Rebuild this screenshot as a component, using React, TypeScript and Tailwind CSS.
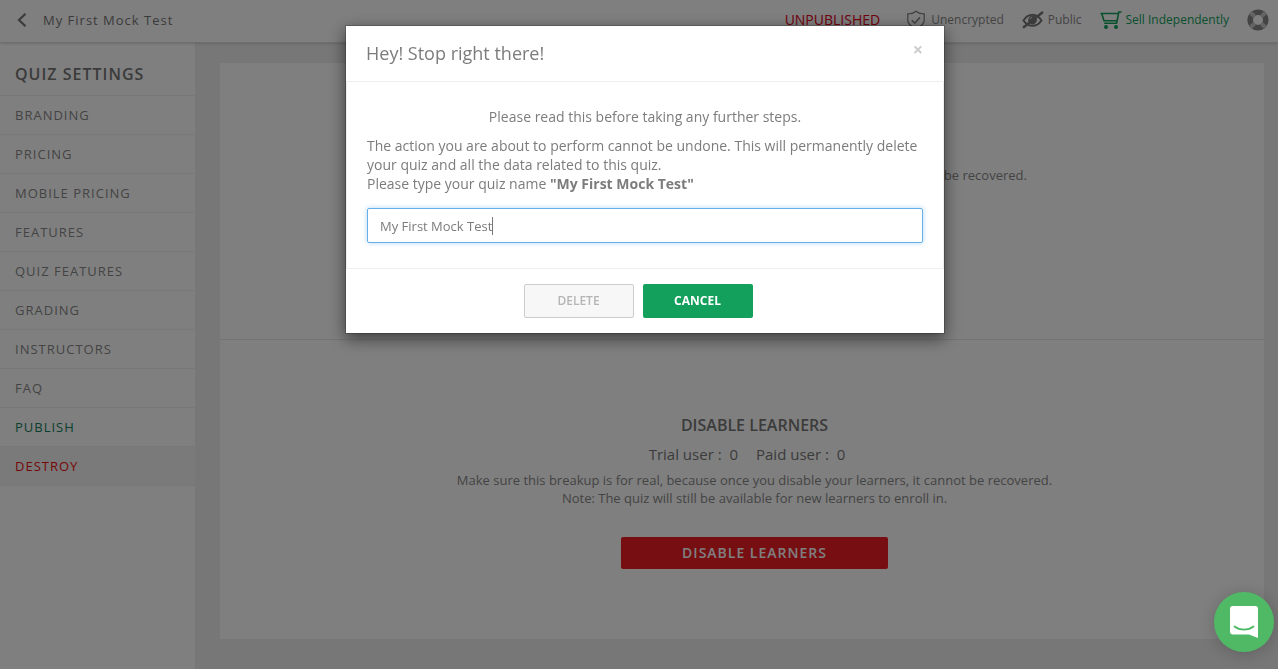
import React, { useState } from 'react';

const QUIZ_NAME = 'My First Mock Test';

const menuItems = [
  { label: 'BRANDING', className: 'text-[#888]' },
  { label: 'PRICING', className: 'text-[#888]' },
  { label: 'MOBILE PRICING', className: 'text-[#888]' },
  { label: 'FEATURES', className: 'text-[#888]' },
  { label: 'QUIZ FEATURES', className: 'text-[#888]' },
  { label: 'GRADING', className: 'text-[#888]' },
  { label: 'INSTRUCTORS', className: 'text-[#888]' },
  { label: 'FAQ', className: 'text-[#888]' },
  { label: 'PUBLISH', className: 'text-[#12805c]' },
  { label: 'DESTROY', className: 'text-[#ee1010] bg-[#f4f4f4]' },
];

const ShieldIcon: React.FC = () => (
  <svg className="w-5 h-5" viewBox="0 0 20 20" fill="none" stroke="currentColor" strokeWidth="1.3">
    <path d="M10 1.2C8 3 5 4 1.8 3.8v6.4c0 4 3.6 6.5 8.2 8.6 4.6-2.1 8.2-4.6 8.2-8.6V3.8C15 4 12 3 10 1.2z" />
    <path d="M5.8 10.2l3 3 5.2-5.8" strokeWidth="1.6" />
  </svg>
);

const EyeOffIcon: React.FC = () => (
  <svg className="w-[22px] h-[18px] text-[#777]" viewBox="0 0 22 18" fill="none" stroke="currentColor">
    <path d="M1.5 9.5C4 5.5 7 3.8 10.5 3.8s6.5 1.7 9 5.7c-2.5 3.7-5.5 5.3-9 5.3s-6.5-1.6-9-5.3z" strokeWidth="2" />
    <circle cx="10.5" cy="9" r="4.4" fill="currentColor" stroke="none" />
    <path d="M8 8.3c.2-1.200 1-1.900 2.200-2" stroke="#fff" strokeWidth="1" />
    <path d="M1 16.800L21 1" strokeWidth="2.400" />
  </svg>
);

const CartIcon: React.FC = () => (
  <svg className="w-[22px] h-[18px]" viewBox="0 0 22 18" fill="none" stroke="currentColor" strokeWidth="1.6">
    <path d="M21.5 1h-2.7l-2.2 11.2H4.2M.5 2.5h17.5M1.7 2.5l2.3 7.3h12.500" />
    <circle cx="6" cy="16" r="2" fill="currentColor" stroke="none" />
    <circle cx="16" cy="16" r="2" fill="currentColor" stroke="none" />
  </svg>
);

const LifeRingIcon: React.FC = () => (
  <svg className="w-[22px] h-[22px]" viewBox="0 0 22 22" fill="none">
    <circle cx="11" cy="11" r="7.8" stroke="#888" strokeWidth="5.6" />
    <path
      d="M3.5 3.5l4.2 4.2M18.5 3.5l-4.2 4.2M3.5 18.5l4.2-4.2M18.5 18.5l-4.2-4.2"
      stroke="#c8c8c8"
      strokeWidth="4"
    />
  </svg>
);

const Header: React.FC = () => (
  <header className="relative flex items-center justify-between h-[43px] pl-4 pr-[9px] pb-[3px] bg-white border-b border-[#ddd] shadow-sm">
    <a href="#quizzes" className="flex items-center gap-4 text-[13px] leading-5 tracking-[1px] text-[#777]">
      <svg className="w-[11px] h-[14px]" viewBox="0 0 11 14" fill="none" stroke="currentColor" strokeWidth="2.2">
        <path d="M9.5 .8L3 7l6.5 6.2" />
      </svg>
      {QUIZ_NAME}
    </a>
    <div className="flex items-center gap-[18px] text-xs text-[#888]">
      <span className="mr-2 text-sm font-medium text-[#e3001b]">UNPUBLISHED</span>
      <span className="flex items-center gap-[5px]">
        <ShieldIcon />
        Unencrypted
      </span>
      <span className="flex items-center gap-1">
        <EyeOffIcon />
        Public
      </span>
      <span className="flex items-center gap-1 text-[#12a05c]">
        <CartIcon />
        Sell Independently
      </span>
      <button type="button" aria-label="Help">
        <LifeRingIcon />
      </button>
    </div>
  </header>
);

const Sidebar: React.FC = () => (
  <aside className="w-[195px] shrink-0 bg-white">
    <h2 className="px-[15px] pt-[19px] pb-[9px] leading-6 text-base font-semibold tracking-[1px] text-[#777] border-b border-[#f0f0f0]">
      QUIZ SETTINGS
    </h2>
    <nav>
      {menuItems.map(item => (
        <a
          key={item.label}
          href="#settings"
          className={`block px-[15px] py-[9px] leading-5 text-[13px] tracking-[1px] border-b border-[#f0f0f0] ${item.className}`}
        >
          {item.label}
        </a>
      ))}
    </nav>
  </aside>
);

const Content: React.FC = () => (
  <main className="grow pt-5 pr-[14px] pb-[30px] pl-[25px] bg-[#eee]">
    <div className="bg-white text-center text-[13px] leading-[18px] text-[#888]">
      <section className="pt-[103px] pb-[155px] pl-[25px] border-b border-[#e8e8e8]">
        <p>Make sure this breakup is for real, because once you delete a quiz, it cannot be recovered.</p>
      </section>
      <section className="flex flex-col items-center pt-[75px] pb-[70px] pl-[25px]">
        <h3 className="mb-[7px] leading-5 text-base font-semibold text-[#777]">DISABLE LEARNERS</h3>
        <div className="flex mb-[5px] leading-6 text-[15px] text-[#777]">
          <span className="mr-[18px]">Trial user : &nbsp;0</span>
          <span className="mr-[15px]">Paid user : &nbsp;0</span>
        </div>
        <p>Make sure this breakup is for real, because once you disable your learners, it cannot be recovered.</p>
        <p>Note: The quiz will still be available for new learners to enroll in.</p>
        <button type="button" className="w-[267px] h-8 mt-[30px] rounded-xs bg-[#ed1c24] text-sm font-semibold tracking-[1px] text-white">
          DISABLE LEARNERS
        </button>
      </section>
    </div>
  </main>
);

const DeleteModal: React.FC = () => {
  const [name, setName] = useState(QUIZ_NAME);

  return (
    <div className="fixed inset-0 z-20 flex items-start justify-center pt-[25px] pl-3 bg-black/50">
      <div
        role="dialog"
        aria-labelledby="modal-title"
        className="w-full max-w-[600px] bg-white bg-clip-padding border border-black/20 shadow-[0_5px_15px_rgba(0,0,0,0.5)] text-sm leading-[19px] text-[#7c7c7c]"
      >
        <div className="flex items-start justify-between pl-5 pr-[21px] py-[15px] border-b border-[#eee]">
          <h1 id="modal-title" className="text-lg leading-[25px]">Hey! Stop right there!</h1>
          <button type="button" aria-label="Close" className="text-lg leading-[17px] font-bold text-[#ccc]">×</button>
        </div>
        <div className="px-5 py-[25px] border-x border-[#eee]">
          <p className="mb-[10px] text-center">Please read this before taking any further steps.</p>
          <p>
            The action you are about to perform cannot be undone. This will permanently delete your quiz and all the
            data related to this quiz.
          </p>
          <label htmlFor="quiz-name" className="block">
            Please type your quiz name <strong>"My First Mock Test"</strong>
          </label>
          <div className="relative mt-[15px]">
            <input
              id="quiz-name"
              type="text"
              autoFocus
              value={name}
              onChange={e => setName(e.target.value)}
              className="block w-full h-[35px] px-3 rounded-xs border border-[#66afe9] outline-none text-[13px] text-[#7c7c7c] shadow-[0_0_5px_rgba(102,175,233,0.5)]"
            />
            {/* resting caret after the prefilled name */}
            {name === QUIZ_NAME && (
              <span className="absolute left-[125px] top-[9px] w-px h-[18px] bg-[#777] pointer-events-none" />
            )}
          </div>
        </div>
        <div className="flex justify-center gap-[9px] py-[15px] pl-5 pr-[34px] border-t border-[#eee] text-xs">
          <button type="button" disabled className="w-[110px] h-[34px] rounded-xs border border-[#ccc] bg-[#f7f7f7] font-semibold text-[#b5b5b5]">
            DELETE
          </button>
          <button type="button" className="w-[110px] h-[34px] rounded-xs bg-[#12a05c] font-bold text-white">
            CANCEL
          </button>
        </div>
      </div>
    </div>
  );
};

const ChatButton: React.FC = () => (
  <button
    type="button"
    aria-label="Open chat"
    className="fixed right-1 bottom-[17px] z-30 flex items-center justify-center w-[60px] h-[60px] rounded-full bg-[#50b966] shadow-[0_2px_16px_rgba(0,0,0,0.2)]"
  >
    <svg className="w-7 h-8" viewBox="0 0 28 32">
      <path d="M3 0h22a3 3 0 0 1 3 3v29c-3-1.2-6-2.6-9-3.5H3a3 3 0 0 1-3-3V3a3 3 0 0 1 3-3z" fill="#fff" />
      <path d="M4.5 20.5c5.5 4.2 13.5 4.2 19 0" fill="none" stroke="#50b966" strokeWidth="1.8" strokeLinecap="round" />
    </svg>
  </button>
);

export default function App() {
  return (
    <div className="flex flex-col min-h-screen font-['Open_Sans',sans-serif]">
      <Header />
      <div className="flex grow">
        <Sidebar />
        <Content />
      </div>
      <DeleteModal />
      <ChatButton />
    </div>
  );
}
